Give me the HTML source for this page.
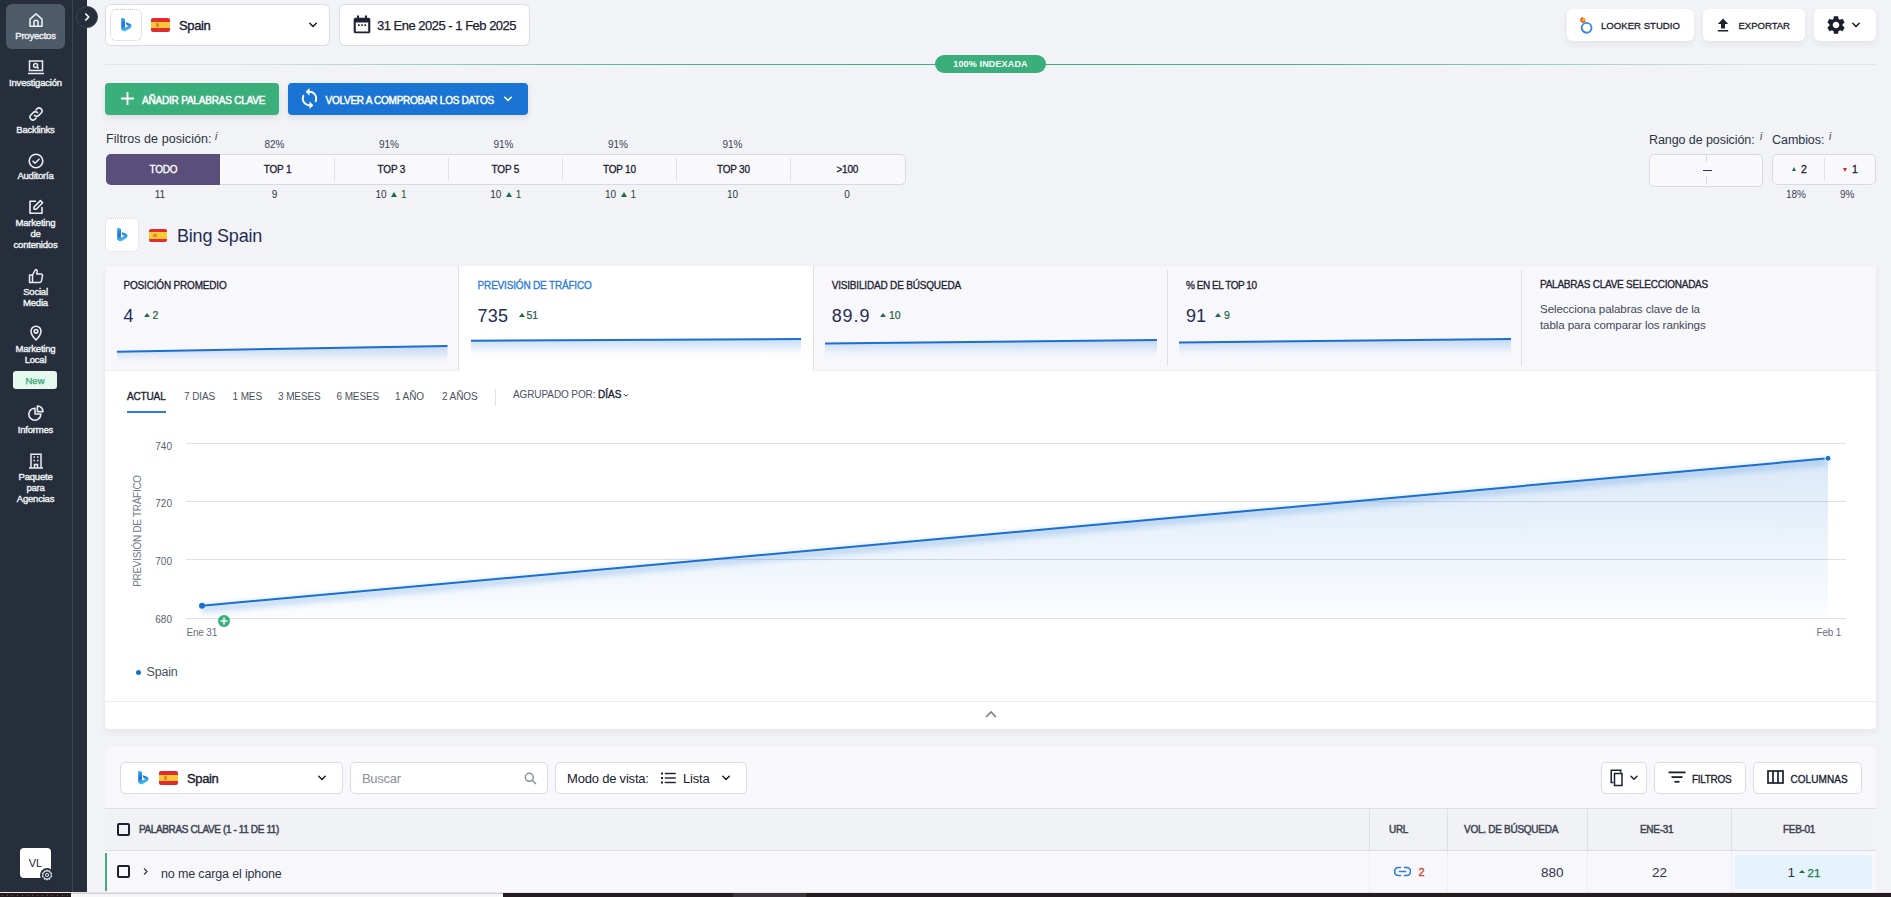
<!DOCTYPE html>
<html><head><meta charset="utf-8">
<style>
*{box-sizing:border-box;margin:0;padding:0}
html,body{width:1891px;height:897px;overflow:hidden}
body{position:relative;background:#f2f3f7;font-family:"Liberation Sans",sans-serif;color:#1e2433}
.a{position:absolute}
.nw{white-space:nowrap}
/* sidebar */
#sb{left:0;top:0;width:87px;height:893px;background:#252e3a}
#sbl{left:72px;top:0;width:1px;height:893px;background:#3c4550}
.si{position:absolute;left:0;width:71px;text-align:center;color:#eef1f5;font-size:9.5px;font-weight:400;line-height:11px;-webkit-text-stroke:.4px #eef1f5;letter-spacing:-0.2px}
.sb{font-weight:400!important;-webkit-text-stroke:.3px currentColor}
.si svg{display:block;margin:0 auto}
.box{position:absolute;background:#fff;border:1px solid #d9dbe6;border-radius:6px}
.btn{position:absolute;background:#fff;border-radius:6px;box-shadow:0 3px 6px rgba(30,40,80,.07)}
.cap{font-weight:400;font-size:10px;text-transform:uppercase;-webkit-text-stroke:.3px currentColor}
.tri{display:inline-block;width:0;height:0;border-left:3px solid transparent;border-right:3px solid transparent;border-bottom:5px solid #1c6b47}
.trd{display:inline-block;width:0;height:0;border-left:3px solid transparent;border-right:3px solid transparent;border-top:5px solid #d8262c}
.flag{position:absolute;border-radius:2px;overflow:hidden;background:linear-gradient(#e02b2f 0,#e02b2f 25%,#fcc934 25%,#fcc934 75%,#e02b2f 75%)}
.flag::after{content:"";position:absolute;left:24%;top:35%;width:18%;height:30%;background:#c0503a;opacity:.55;border-radius:1px}
</style></head><body>

<!-- SIDEBAR -->
<div id="sb" class="a"></div>
<div id="sbl" class="a"></div>
<div class="a" style="left:6px;top:4px;width:59px;height:45px;background:#4d5a68;border-radius:6px"></div>

<div class="si" style="top:12px">
<svg width="16" height="16" viewBox="0 0 16 16" fill="none" stroke="#e9edf2" stroke-width="1.6" stroke-linejoin="round"><path d="M2 7.2 8 1.8l6 5.4V14.2H2Z"/><path d="M6 14.2V10.2a2 2 0 0 1 4 0v4"/></svg>
<div style="margin-top:2px">Proyectos</div></div>

<div class="si" style="top:60px">
<svg width="18" height="15" viewBox="0 0 18 15" fill="none" stroke="#e9edf2" stroke-width="1.5"><rect x="2.5" y="1" width="13" height="9.5"/><path d="M1 13.5h16"/><circle cx="8.6" cy="5.4" r="2"/><path d="m10 7 1.6 1.6"/></svg>
<div style="margin-top:2px">Investigación</div></div>

<div class="si" style="top:106px">
<svg width="16" height="16" viewBox="0 0 16 16" fill="none" stroke="#e9edf2" stroke-width="1.6" stroke-linecap="round"><path d="M6.6 9.4a3 3 0 0 0 4.2 0l2.6-2.6a3 3 0 0 0-4.2-4.2L8 3.8"/><path d="M9.4 6.6a3 3 0 0 0-4.2 0L2.6 9.2a3 3 0 0 0 4.2 4.2L8 12.2"/></svg>
<div style="margin-top:2px">Backlinks</div></div>

<div class="si" style="top:153px">
<svg width="16" height="16" viewBox="0 0 16 16" fill="none" stroke="#e9edf2" stroke-width="1.6" stroke-linecap="round" stroke-linejoin="round"><circle cx="8" cy="8" r="6.8"/><path d="m5 8.2 2 2 4-4"/></svg>
<div style="margin-top:1px">Auditoría</div></div>

<div class="si" style="top:199px">
<svg width="16" height="16" viewBox="0 0 16 16" fill="none" stroke="#e9edf2" stroke-width="1.6" stroke-linejoin="round"><path d="M8 2.2H2v12h12V8"/><path d="M12.4 1.6 14.6 3.8 8.2 10.2H6V8Z"/></svg>
<div style="margin-top:2px">Marketing<br>de<br>contenidos</div></div>

<div class="si" style="top:268px">
<svg width="16" height="16" viewBox="0 0 16 16" fill="none" stroke="#e9edf2" stroke-width="1.5" stroke-linejoin="round"><path d="M1.5 7h3v7.5h-3z"/><path d="M4.5 7 7.5 1.5c1.5 0 2 1 1.7 2.3L8.7 6h4.3c1 0 1.7.9 1.5 1.9l-1.1 5.2c-.2.9-1 1.4-1.9 1.4H4.5"/></svg>
<div style="margin-top:2px">Social<br>Media</div></div>

<div class="si" style="top:325px">
<svg width="16" height="16" viewBox="0 0 16 16" fill="none" stroke="#e9edf2" stroke-width="1.6" stroke-linejoin="round"><path d="M8 15s5-5.2 5-8.8A5 5 0 0 0 3 6.2C3 9.8 8 15 8 15Z"/><circle cx="8" cy="6.3" r="1.8"/></svg>
<div style="margin-top:2px">Marketing<br>Local</div></div>
<div class="a" style="left:13px;top:371px;width:44px;height:18px;background:#e4f8ee;border-radius:3px;color:#2fa56f;font-size:9.5px;font-weight:400;text-align:center;line-height:19px;-webkit-text-stroke:.25px #2fa56f">New</div>

<div class="si" style="top:405px">
<svg width="16" height="16" viewBox="0 0 16 16" fill="none" stroke="#e9edf2" stroke-width="1.6" stroke-linejoin="round"><path d="M7 3.2A6 6 0 1 0 12.8 9H7Z"/><path d="M9.4 1v5.6H15A5.6 5.6 0 0 0 9.4 1Z"/></svg>
<div style="margin-top:3px">Informes</div></div>

<div class="si" style="top:453px">
<svg width="16" height="16" viewBox="0 0 16 16" fill="none" stroke="#e9edf2" stroke-width="1.5"><path d="M3 15V1.2h10V15"/><path d="M1 15h14"/><path d="M6.5 15v-3.5h3V15"/><path d="M5.5 4h1.5M9 4h1.5M5.5 7.5h1.5M9 7.5h1.5"/></svg>
<div style="margin-top:2px">Paquete<br>para<br>Agencias</div></div>

<!-- avatar -->
<div class="a" style="left:20px;top:848px;width:31px;height:30px;background:#fff;border-radius:4px;font-size:11px;color:#1d2230;text-align:center;line-height:30px">VL</div>
<div class="a" style="left:40px;top:868px;width:14px;height:14px;border-radius:50%;background:#252e3a"></div>
<svg class="a" style="left:41px;top:869px" width="12" height="12" viewBox="0 0 12 12" fill="none" stroke="#e0e4ea" stroke-width="1.1"><circle cx="6" cy="6" r="1.5"/><path d="M6 1.2 7 2.4 8.6 2 9 3.5 10.6 4.2 10 5.6 10.6 7.4 9 8.3 8.6 10 7 9.6 6 10.8 5 9.6 3.4 10 3 8.3 1.4 7.4 2 5.6 1.4 4.2 3 3.5 3.4 2 5 2.4Z"/></svg>

<!-- collapse btn -->
<div class="a" style="left:76px;top:6px;width:22px;height:22px;border-radius:50%;background:#252e3a;border:1px solid #3a4350"></div>
<svg class="a" style="left:83px;top:12px" width="9" height="10" viewBox="0 0 9 10" fill="none" stroke="#fff" stroke-width="1.7" stroke-linecap="round" stroke-linejoin="round"><path d="m2.8 2 3 3-3 3"/></svg>


<!-- TABLE -->
<div class="a" style="left:105px;top:747px;width:1771px;height:146px;background:#f8f8fc;border-radius:5px 5px 0 0"></div>
<div class="box" style="left:120px;top:762px;width:223px;height:32px;border-radius:5px"></div>
<svg class="a" style="left:137px;top:770px" width="12" height="16" viewBox="0 0 12 16"><path d="M1.2 1.2Q1.2.6 1.9.8L4.4 1.7Q5 1.9 5 2.6V10.8L8.4 8.9 6.8 8.1Q6.4 7.9 6.3 7.5L5.8 5.6Q5.7 5.1 6.2 5.3L10.4 6.9Q11.4 7.3 11.4 8.4V9.6Q11.4 10.5 10.6 11L6.2 13.8Q4.6 14.8 3 13.9L1.9 13.1Q1.2 12.6 1.2 11.8Z" fill="url(#bg1)"/></svg>
<div class="flag" style="left:159px;top:771px;width:19px;height:14px"></div>
<div class="a nw" style="left:187px;top:771px;font-size:13px;line-height:15px;font-weight:400;-webkit-text-stroke:.35px #1a2030;color:#1a2030;letter-spacing:-0.35px">Spain</div>
<svg class="a" style="left:317px;top:774px" width="10" height="8" viewBox="0 0 10 8" fill="none" stroke="#1f2430" stroke-width="1.6" stroke-linecap="round" stroke-linejoin="round"><path d="m1.8 2.3 3.2 3.2 3.2-3.2"/></svg>

<div class="box" style="left:350px;top:762px;width:198px;height:32px;border-radius:5px"></div>
<div class="a nw" style="left:362px;top:771px;font-size:13px;line-height:15px;color:#8a909c;letter-spacing:-0.3px">Buscar</div>
<svg class="a" style="left:524px;top:772px" width="13" height="13" viewBox="0 0 13 13" fill="none" stroke="#8a909c" stroke-width="1.5"><circle cx="5.3" cy="5.3" r="4"/><path d="m8.3 8.3 3.7 3.7"/></svg>

<div class="box" style="left:555px;top:762px;width:192px;height:32px;border-radius:5px"></div>
<div class="a nw" style="left:567px;top:771px;font-size:13px;line-height:15px;color:#1a2030;letter-spacing:-0.2px">Modo de vista:</div>
<svg class="a" style="left:661px;top:772px" width="15" height="12" viewBox="0 0 15 12" fill="#1a2030"><rect x="0" y="0.5" width="2" height="2"/><rect x="0" y="5" width="2" height="2"/><rect x="0" y="9.5" width="2" height="2"/><rect x="3.8" y="0.8" width="11" height="1.4"/><rect x="3.8" y="5.3" width="11" height="1.4"/><rect x="3.8" y="9.8" width="11" height="1.4"/></svg>
<div class="a nw" style="left:683px;top:771px;font-size:13px;line-height:15px;color:#1a2030;letter-spacing:-0.2px">Lista</div>
<svg class="a" style="left:721px;top:774px" width="10" height="8" viewBox="0 0 10 8" fill="none" stroke="#1f2430" stroke-width="1.6" stroke-linecap="round" stroke-linejoin="round"><path d="m1.8 2.3 3.2 3.2 3.2-3.2"/></svg>

<div class="box" style="left:1601px;top:762px;width:46px;height:32px;border-radius:5px"></div>
<svg class="a" style="left:1610px;top:769px" width="17" height="18" viewBox="0 0 17 18" fill="none" stroke="#1a2030" stroke-width="1.5"><path d="M3.5 13.5H1.2V1.2h9.5v2.3"/><rect x="4.5" y="4.5" width="7.5" height="12"/></svg>
<svg class="a" style="left:1629px;top:774px" width="10" height="8" viewBox="0 0 10 8" fill="none" stroke="#1f2430" stroke-width="1.5" stroke-linecap="round" stroke-linejoin="round"><path d="m2 2.3 3 3 3-3"/></svg>
<div class="box" style="left:1654px;top:762px;width:92px;height:32px;border-radius:5px"></div>
<svg class="a" style="left:1668px;top:771px" width="18" height="13" viewBox="0 0 18 13" fill="#1a2030"><rect x="0.5" y="0.5" width="17" height="1.8"/><rect x="3.5" y="5.2" width="11" height="1.8"/><rect x="6.5" y="9.9" width="5" height="1.8"/></svg>
<div class="a nw cap" style="left:1692px;top:773.5px;line-height:11px;color:#1a2030;letter-spacing:-0.3px">Filtros</div>
<div class="box" style="left:1753px;top:762px;width:109px;height:32px;border-radius:5px"></div>
<svg class="a" style="left:1767px;top:770px" width="17" height="14" viewBox="0 0 17 14" fill="none" stroke="#1a2030" stroke-width="1.7"><rect x="1" y="1" width="15" height="12"/><path d="M6 1v12M11 1v12"/></svg>
<div class="a nw cap" style="left:1790.5px;top:773.5px;line-height:11px;color:#1a2030;letter-spacing:0.06px">Columnas</div>

<div class="a" style="left:105px;top:808px;width:1771px;height:1px;background:#dcdfe8"></div>
<div class="a" style="left:105px;top:809px;width:1771px;height:41px;background:#f1f2f6"></div>
<div class="a" style="left:105px;top:850px;width:1771px;height:1px;background:#d9dce6"></div>
<div class="a" style="left:117px;top:823px;width:13px;height:13px;border:2px solid #1d2231;border-radius:2px"></div>
<div class="a nw cap" style="left:139px;top:824px;line-height:11px;color:#3d4452;-webkit-text-stroke:.45px #3d4452;letter-spacing:-0.38px">Palabras clave (1 - 11 de 11)</div>
<div class="a" style="left:1369px;top:809px;width:1px;height:41px;background:#dcdfe8"></div>
<div class="a" style="left:1447px;top:809px;width:1px;height:41px;background:#dcdfe8"></div>
<div class="a" style="left:1587px;top:809px;width:1px;height:41px;background:#dcdfe8"></div>
<div class="a" style="left:1731px;top:809px;width:1px;height:41px;background:#dcdfe8"></div>
<div class="a nw cap" style="left:1389px;top:824px;line-height:11px;color:#3d4452;-webkit-text-stroke:.45px #3d4452;letter-spacing:-0.3px">URL</div>
<div class="a nw cap" style="left:1464px;top:824px;line-height:11px;color:#3d4452;-webkit-text-stroke:.45px #3d4452;letter-spacing:-0.27px">Vol. de búsqueda</div>
<div class="a nw cap" style="left:1640px;top:824px;line-height:11px;color:#3d4452;-webkit-text-stroke:.45px #3d4452;letter-spacing:-0.3px">Ene-31</div>
<div class="a nw cap" style="left:1783px;top:824px;line-height:11px;color:#3d4452;-webkit-text-stroke:.45px #3d4452;letter-spacing:-0.3px">Feb-01</div>

<div class="a" style="left:105px;top:851px;width:1771px;height:42px;background:#f8f8fc"></div>
<div class="a" style="left:105px;top:853px;width:2px;height:38px;background:#3aae7b"></div>
<div class="a" style="left:1369px;top:851px;width:1px;height:42px;background:#eceef3"></div>
<div class="a" style="left:1447px;top:851px;width:1px;height:42px;background:#eceef3"></div>
<div class="a" style="left:1587px;top:851px;width:1px;height:42px;background:#eceef3"></div>
<div class="a" style="left:1731px;top:851px;width:1px;height:42px;background:#eceef3"></div>
<div class="a" style="left:117px;top:865px;width:13px;height:13px;border:2px solid #1d2231;border-radius:2px"></div>
<svg class="a" style="left:142px;top:867px" width="7" height="9" viewBox="0 0 7 9" fill="none" stroke="#3a4150" stroke-width="1.3"><path d="m2 1.5 3 3-3 3"/></svg>
<div class="a nw" style="left:161px;top:867px;font-size:12.5px;line-height:15px;color:#2d3444;letter-spacing:-0.15px">no me carga el iphone</div>
<svg class="a" style="left:1394px;top:866px" width="17" height="11" viewBox="0 0 17 11" fill="none" stroke="#2a7ad6" stroke-width="1.6" stroke-linecap="round"><path d="M6.5 1.5h-2a4 4 0 0 0 0 8h2M10.5 1.5h2a4 4 0 0 1 0 8h-2M5.5 5.5h6"/></svg>
<div class="a nw" style="left:1418.5px;top:866px;font-size:11px;line-height:13px;color:#d13a2e;-webkit-text-stroke:.3px #d13a2e">2</div>
<div class="a nw" style="left:1541px;top:865px;font-size:13.5px;line-height:15px;color:#2d3444">880</div>
<div class="a nw" style="left:1652px;top:865px;font-size:13.5px;line-height:15px;color:#2d3444">22</div>
<div class="a" style="left:1735px;top:855px;width:137px;height:34px;background:#e4f3fc;border-radius:3px"></div>
<div class="a nw" style="left:1787.5px;top:865px;font-size:13.5px;line-height:15px;color:#2d3444">1</div>
<span class="a" style="left:1799px;top:869.5px;width:0;height:0;border-left:3px solid transparent;border-right:3px solid transparent;border-bottom:3.6px solid #1c6b47"></span>
<div class="a nw" style="left:1807.5px;top:865.5px;font-size:11.5px;line-height:15px;color:#1c7a4a;-webkit-text-stroke:.25px #1c7a4a">21</div>

<!-- bottom strip -->
<div class="a" style="left:0;top:892px;width:1891px;height:1px;background:#e6e6e6"></div>
<div class="a" style="left:0;top:893px;width:1891px;height:4px;background:#231c1e"></div>
<div class="a" style="left:0;top:894px;width:70px;height:3px;background-image:radial-gradient(circle,#9a3a5a 0.7px,transparent 0.9px);background-size:5px 3px"></div>
<div class="a" style="left:71px;top:893px;width:432px;height:4px;background:#f7f7f7;border-top:1px solid #cfcfcf"></div>
<div class="a" style="left:733px;top:893px;width:73px;height:4px;background:#3b3438"></div>


<!-- TOP BAR -->
<div class="box" style="left:105px;top:4px;width:225px;height:42px"></div>
<div class="a" style="left:110px;top:9px;width:32px;height:32px;border:1px dotted #c3c7d4;border-radius:6px;background:#fff"></div>
<svg class="a" style="left:120px;top:17px" width="12" height="16" viewBox="0 0 12 16"><defs><linearGradient id="bg1" x1="0" y1="0" x2=".3" y2="1"><stop offset="0" stop-color="#35b6ee"/><stop offset=".55" stop-color="#1f6fd6"/><stop offset="1" stop-color="#45c6f2"/></linearGradient></defs><path d="M1.2 1.2Q1.2.6 1.9.8L4.4 1.7Q5 1.9 5 2.6V10.8L8.4 8.9 6.8 8.1Q6.4 7.9 6.3 7.5L5.8 5.6Q5.7 5.1 6.2 5.3L10.4 6.9Q11.4 7.3 11.4 8.4V9.6Q11.4 10.5 10.6 11L6.2 13.8Q4.6 14.8 3 13.9L1.9 13.1Q1.2 12.6 1.2 11.8Z" fill="url(#bg1)"/></svg>
<div class="flag" style="left:151px;top:18px;width:19px;height:14px"></div>
<div class="a nw" style="left:179px;top:18px;font-size:13px;line-height:16px;font-weight:400;-webkit-text-stroke:.35px #1a2030;color:#1a2030;letter-spacing:-0.35px">Spain</div>
<svg class="a" style="left:308px;top:21px" width="10" height="8" viewBox="0 0 10 8" fill="none" stroke="#1f2430" stroke-width="1.6" stroke-linecap="round" stroke-linejoin="round"><path d="m1.8 2.3 3.2 3.2 3.2-3.2"/></svg>

<div class="box" style="left:339px;top:4px;width:191px;height:42px"></div>
<svg class="a" style="left:353px;top:15px" width="18" height="19" viewBox="0 0 18 19"><path d="M4 0.5h2v2.2h6V0.5h2v2.2h1.5c1 0 1.8.8 1.8 1.8v12c0 1-.8 1.8-1.8 1.8h-13C1.5 18.3.7 17.5.7 16.5v-12c0-1 .8-1.8 1.8-1.8H4Z M2.8 7.5v9h12.4v-9Z M5 9.3h1.6v1.6H5Z M8.2 9.3h1.6v1.6H8.2Z M11.4 9.3h1.6v1.6h-1.6Z" fill="#1d2231" fill-rule="evenodd"/></svg>
<div class="a nw" style="left:377px;top:18px;font-size:13px;line-height:16px;color:#1a2030;letter-spacing:-0.5px;-webkit-text-stroke:.25px #1a2030">31 Ene 2025 - 1 Feb 2025</div>

<div class="btn" style="left:1567px;top:9px;width:127px;height:32px"></div>
<svg class="a" style="left:1579px;top:16px" width="15" height="18" viewBox="0 0 15 18"><circle cx="7.6" cy="11.8" r="4.9" fill="none" stroke="#3b86e0" stroke-width="1.9"/><circle cx="4" cy="4" r="2.5" fill="#f3b71c"/><path d="M4 1.9A2.1 2.1 0 1 0 6 4.6" fill="none" stroke="#e6322e" stroke-width="1.1"/></svg>
<div class="a nw cap" style="left:1601px;top:19.8px;font-size:9.6px;line-height:11px;color:#1d2231;letter-spacing:0px">Looker Studio</div>
<div class="btn" style="left:1703px;top:9px;width:102px;height:32px"></div>
<svg class="a" style="left:1717px;top:18px" width="12" height="14" viewBox="0 0 12 14"><path d="M6 0.5 11.2 6H8v4.4H4V6H0.8Z M0.8 12h10.4v1.6H0.8Z" fill="#1d2231"/></svg>
<div class="a nw cap" style="left:1738.5px;top:19.8px;font-size:9.6px;line-height:11px;color:#1d2231;letter-spacing:-0.05px">Exportar</div>
<div class="btn" style="left:1814px;top:9px;width:62px;height:32px"></div>
<svg class="a" style="left:1825px;top:14px" width="22" height="22" viewBox="0 0 24 24"><path fill="#1a1f2e" d="M19.14 12.94c.04-.3.06-.61.06-.94 0-.32-.02-.64-.07-.94l2.03-1.58a.49.49 0 0 0 .12-.61l-1.92-3.32a.488.488 0 0 0-.59-.22l-2.39.96c-.5-.38-1.03-.7-1.62-.94l-.36-2.54a.484.484 0 0 0-.48-.41h-3.84c-.24 0-.43.17-.47.41l-.36 2.54c-.59.24-1.13.57-1.62.94l-2.39-.96c-.22-.08-.47 0-.59.22L2.74 8.87c-.12.21-.08.47.12.61l2.03 1.58c-.05.3-.09.63-.09.94s.02.64.07.94l-2.03 1.58a.49.49 0 0 0-.12.61l1.92 3.32c.12.22.37.29.59.22l2.39-.96c.5.38 1.03.7 1.62.94l.36 2.54c.05.24.24.41.48.41h3.84c.24 0 .44-.17.47-.41l.36-2.54c.59-.24 1.13-.56 1.62-.94l2.39.96c.22.08.47 0 .59-.22l1.92-3.32c.12-.22.07-.47-.12-.61l-2.01-1.58zM12 15.6c-1.98 0-3.6-1.62-3.6-3.6s1.62-3.6 3.6-3.6 3.6 1.62 3.6 3.6-1.62 3.6-3.6 3.6z"/></svg>
<svg class="a" style="left:1851px;top:21px" width="10" height="8" viewBox="0 0 10 8" fill="none" stroke="#1f2430" stroke-width="1.6" stroke-linecap="round" stroke-linejoin="round"><path d="m1.8 2.3 3.2 3.2 3.2-3.2"/></svg>

<!-- index line -->
<div class="a" style="left:105px;top:64px;width:1771px;height:1px;background:linear-gradient(90deg,#e2e5ee 0,#dde0ea 8%,#9fd4b8 17%,#4ab386 32%,#3aae7b 50%,#4ab386 68%,#9fd4b8 83%,#dde0ea 92%,#e2e5ee 100%)"></div>
<div class="a nw" style="left:935px;top:55px;width:111px;height:18px;border-radius:9px;background:#3aae7b;color:#fff;font-size:9px;font-weight:700;text-align:center;line-height:18px;letter-spacing:0.15px">100% INDEXADA</div>

<!-- action buttons -->
<div class="a" style="left:105px;top:83px;width:174px;height:32px;background:#3aae7b;border-radius:4px;box-shadow:0 3px 6px rgba(30,40,80,.1)"></div>
<svg class="a" style="left:120px;top:91px" width="15" height="15" viewBox="0 0 15 15" stroke="#fff" stroke-width="1.8"><path d="M7.5 1v13M1 7.5h13"/></svg>
<div class="a nw cap" style="left:142px;top:94.5px;line-height:11px;color:#fff;letter-spacing:-0.2px;-webkit-text-stroke:.45px #fff">Añadir palabras clave</div>
<div class="a" style="left:288px;top:83px;width:240px;height:32px;background:#1a74d4;border-radius:4px;box-shadow:0 3px 6px rgba(30,40,80,.1)"></div>
<svg class="a" style="left:298px;top:86px" width="23" height="25" viewBox="0 0 24 24"><path fill="#fff" d="M12 4V1L8 5l4 4V6c3.31 0 6 2.69 6 6 0 1.01-.25 1.97-.7 2.8l1.46 1.46A7.93 7.93 0 0 0 20 12c0-4.42-3.58-8-8-8zm0 14c-3.31 0-6-2.69-6-6 0-1.01.25-1.97.7-2.8L5.24 7.74A7.93 7.93 0 0 0 4 12c0 4.42 3.58 8 8 8v3l4-4-4-4v3z"/></svg>
<div class="a nw cap" style="left:325.5px;top:94.5px;line-height:11px;color:#fff;letter-spacing:-0.26px;-webkit-text-stroke:.45px #fff">Volver a comprobar los datos</div>
<svg class="a" style="left:503px;top:95px" width="10" height="8" viewBox="0 0 10 8" fill="none" stroke="#fff" stroke-width="1.6" stroke-linecap="round" stroke-linejoin="round"><path d="m1.8 2.3 3.2 3.2 3.2-3.2"/></svg>


<!-- FILTERS -->
<div class="a nw" style="left:106px;top:132px;font-size:12.5px;line-height:15px;color:#2d3444;letter-spacing:0.07px">Filtros de posición:</div>
<div class="a" style="left:215px;top:131px;font-size:10px;font-style:italic;color:#2d3444">i</div>
<div class="a" style="left:106px;top:154px;width:800px;height:31px;background:#f9f9fc;border:1px solid #d7d9e4;border-radius:5px"></div>
<div class="a" style="left:106px;top:154px;width:114px;height:31px;background:#5a4f7b;border-radius:5px 0 0 5px"></div>
<div id="tabs"></div>
<div class="a nw cap" style="left:106.5px;top:164px;width:114px;text-align:center;line-height:11px;color:#fff;letter-spacing:-0.2px">TODO</div>
<div class="a nw" style="left:103.0px;top:189px;width:114px;text-align:center;font-size:10px;line-height:11px;color:#2d3444">11</div>
<div class="a nw cap" style="left:220.5px;top:164px;width:114px;text-align:center;line-height:11px;color:#1d2231;letter-spacing:-0.2px">TOP 1</div>
<div class="a nw" style="left:217.5px;top:139px;width:114px;text-align:center;font-size:10px;line-height:11px;color:#3a4150">82%</div>
<div class="a nw" style="left:217.5px;top:189px;width:114px;text-align:center;font-size:10px;line-height:11px;color:#2d3444">9</div>
<div class="a nw cap" style="left:334.4px;top:164px;width:114px;text-align:center;line-height:11px;color:#1d2231;letter-spacing:-0.2px">TOP 3</div>
<div class="a" style="left:333.9px;top:158px;width:1px;height:23px;background:#dfe1ea"></div>
<div class="a nw" style="left:332.0px;top:139px;width:114px;text-align:center;font-size:10px;line-height:11px;color:#3a4150">91%</div>
<div class="a nw" style="left:334.0px;top:189px;width:114px;text-align:center;font-size:10px;line-height:11px;color:#2d3444">10 <span class="tri" style="margin:0 1px 1px 2px"></span> <span style="color:#1f4d3a">1</span></div>
<div class="a nw cap" style="left:448.4px;top:164px;width:114px;text-align:center;line-height:11px;color:#1d2231;letter-spacing:-0.2px">TOP 5</div>
<div class="a" style="left:447.9px;top:158px;width:1px;height:23px;background:#dfe1ea"></div>
<div class="a nw" style="left:446.5px;top:139px;width:114px;text-align:center;font-size:10px;line-height:11px;color:#3a4150">91%</div>
<div class="a nw" style="left:448.8px;top:189px;width:114px;text-align:center;font-size:10px;line-height:11px;color:#2d3444">10 <span class="tri" style="margin:0 1px 1px 2px"></span> <span style="color:#1f4d3a">1</span></div>
<div class="a nw cap" style="left:562.4px;top:164px;width:114px;text-align:center;line-height:11px;color:#1d2231;letter-spacing:-0.2px">TOP 10</div>
<div class="a" style="left:561.9px;top:158px;width:1px;height:23px;background:#dfe1ea"></div>
<div class="a nw" style="left:561.0px;top:139px;width:114px;text-align:center;font-size:10px;line-height:11px;color:#3a4150">91%</div>
<div class="a nw" style="left:563.5px;top:189px;width:114px;text-align:center;font-size:10px;line-height:11px;color:#2d3444">10 <span class="tri" style="margin:0 1px 1px 2px"></span> <span style="color:#1f4d3a">1</span></div>
<div class="a nw cap" style="left:676.4px;top:164px;width:114px;text-align:center;line-height:11px;color:#1d2231;letter-spacing:-0.2px">TOP 30</div>
<div class="a" style="left:675.9px;top:158px;width:1px;height:23px;background:#dfe1ea"></div>
<div class="a nw" style="left:675.5px;top:139px;width:114px;text-align:center;font-size:10px;line-height:11px;color:#3a4150">91%</div>
<div class="a nw" style="left:675.5px;top:189px;width:114px;text-align:center;font-size:10px;line-height:11px;color:#2d3444">10</div>
<div class="a nw cap" style="left:790.3px;top:164px;width:114px;text-align:center;line-height:11px;color:#1d2231;letter-spacing:-0.2px">&gt;100</div>
<div class="a" style="left:789.8px;top:158px;width:1px;height:23px;background:#dfe1ea"></div>
<div class="a nw" style="left:790.0px;top:189px;width:114px;text-align:center;font-size:10px;line-height:11px;color:#2d3444">0</div>

<div class="a nw" style="left:1649px;top:133px;font-size:12.5px;line-height:15px;color:#2d3444;letter-spacing:-0.08px">Rango de posición:</div>
<div class="a" style="left:1760px;top:131px;font-size:10px;font-style:italic;color:#2d3444">i</div>
<div class="a nw" style="left:1772px;top:133px;font-size:12.5px;line-height:15px;color:#2d3444;letter-spacing:-0.05px">Cambios:</div>
<div class="a" style="left:1829px;top:131px;font-size:10px;font-style:italic;color:#2d3444">i</div>
<div class="a" style="left:1649px;top:154px;width:114px;height:33px;background:#f9f9fc;border:1px solid #d7d9e4;border-radius:5px"></div>
<div class="a" style="left:1706px;top:155px;width:1px;height:7px;background:#d7d9e4"></div>
<div class="a" style="left:1706px;top:177px;width:1px;height:8px;background:#d7d9e4"></div>
<div class="a" style="left:1703px;top:169.5px;width:9px;height:1.6px;background:#2a3070"></div>
<div class="a" style="left:1772px;top:154px;width:104px;height:31px;background:#f9f9fc;border:1px solid #d7d9e4;border-radius:5px"></div>
<div class="a" style="left:1824px;top:158px;width:1px;height:23px;background:#dfe1ea"></div>
<span class="a" style="left:1792px;top:167px;width:0;height:0;border-left:2.6px solid transparent;border-right:2.6px solid transparent;border-bottom:4px solid #1c6b47"></span>
<div class="a nw" style="left:1801px;top:164px;font-size:10.5px;line-height:11px;color:#1d2231;-webkit-text-stroke:.3px #1d2231">2</div>
<span class="a" style="left:1843px;top:168px;width:0;height:0;border-left:2.6px solid transparent;border-right:2.6px solid transparent;border-top:4px solid #d8262c"></span>
<div class="a nw" style="left:1852px;top:164px;font-size:10.5px;line-height:11px;color:#1d2231;-webkit-text-stroke:.3px #1d2231">1</div>
<div class="a nw" style="left:1786px;top:189px;font-size:10px;line-height:11px;color:#3a4150">18%</div>
<div class="a nw" style="left:1840px;top:189px;font-size:10px;line-height:11px;color:#3a4150">9%</div>

<!-- BING SPAIN header -->
<div class="a" style="left:105px;top:218px;width:34px;height:34px;border:1px dotted #ced1dc;border-radius:6px;background:#fff"></div>
<svg class="a" style="left:116px;top:227px" width="12" height="16" viewBox="0 0 12 16"><path d="M1.2 1.2Q1.2.6 1.9.8L4.4 1.7Q5 1.9 5 2.6V10.8L8.4 8.9 6.8 8.1Q6.4 7.9 6.3 7.5L5.8 5.6Q5.7 5.1 6.2 5.3L10.4 6.9Q11.4 7.3 11.4 8.4V9.6Q11.4 10.5 10.6 11L6.2 13.8Q4.6 14.8 3 13.9L1.9 13.1Q1.2 12.6 1.2 11.8Z" fill="url(#bg1)"/></svg>
<div class="flag" style="left:149px;top:229px;width:18px;height:13px"></div>
<div class="a nw" style="left:177px;top:226px;font-size:18px;line-height:21px;color:#262d52;letter-spacing:-0.2px">Bing Spain</div>


<!-- METRIC CARDS -->
<div class="a" style="left:105px;top:266px;width:1771px;height:463px;background:#fff;border-radius:4px;box-shadow:0 3px 7px rgba(40,50,90,.07)"></div>
<div class="a" style="left:105px;top:266px;width:353px;height:105px;background:#f8f8fc;border-bottom:1px solid #eceef4"></div>
<div class="a" style="left:814px;top:266px;width:1062px;height:105px;background:#f8f8fc;border-bottom:1px solid #eceef4"></div>
<div class="a" style="left:458px;top:266px;width:1px;height:104px;background:#dfe1ea"></div>
<div class="a" style="left:813px;top:266px;width:1px;height:104px;background:#dfe1ea"></div>
<div class="a" style="left:1167px;top:270px;width:1px;height:96px;background:#dfe1ea"></div>
<div class="a" style="left:1521px;top:270px;width:1px;height:96px;background:#dfe1ea"></div>
<div class="a nw cap" style="left:123.5px;top:280px;line-height:11px;color:#1d2231;letter-spacing:-0.18px">Posición promedio</div>
<div class="a nw" style="left:123.5px;top:305.5px;font-size:18px;line-height:21px;color:#262d52;letter-spacing:0px">4</div>
<span class="a" style="left:144px;top:313px;width:0;height:0;border-left:3.2px solid transparent;border-right:3.2px solid transparent;border-bottom:4.6px solid #1c6b47"></span>
<div class="a nw" style="left:152.5px;top:308.5px;font-size:10.5px;line-height:12px;color:#1c5e42;-webkit-text-stroke:.2px #1c5e42">2</div>
<svg class="a" style="left:117px;top:342.5px" width="330.5" height="22" viewBox="0 0 330.5 22"><defs><linearGradient id="sg0" x1="0" y1="0" x2="0" y2="1"><stop offset="0" stop-color="#2a7ad6" stop-opacity=".26"/><stop offset=".75" stop-color="#2a7ad6" stop-opacity=".03"/><stop offset="1" stop-color="#2a7ad6" stop-opacity="0"/></linearGradient></defs><path d="M0 8.699999999999989 L330.5 3.0 V22 H0Z" fill="url(#sg0)"/><path d="M0 8.699999999999989 L330.5 3.0" stroke="#1b6fd0" stroke-width="2" fill="none"/></svg>
<div class="a nw cap" style="left:477.6px;top:280px;line-height:11px;color:#2a7ad6;letter-spacing:-0.18px">Previsión de tráfico</div>
<div class="a nw" style="left:477.6px;top:305.5px;font-size:18px;line-height:21px;color:#262d52;letter-spacing:0.2px">735</div>
<span class="a" style="left:518.7px;top:313px;width:0;height:0;border-left:3.2px solid transparent;border-right:3.2px solid transparent;border-bottom:4.6px solid #1c6b47"></span>
<div class="a nw" style="left:526.5px;top:308.5px;font-size:10.5px;line-height:12px;color:#1c5e42;-webkit-text-stroke:.2px #1c5e42">51</div>
<svg class="a" style="left:470.7px;top:335.5px" width="330.8" height="22" viewBox="0 0 330.8 22"><defs><linearGradient id="sg1" x1="0" y1="0" x2="0" y2="1"><stop offset="0" stop-color="#2a7ad6" stop-opacity=".26"/><stop offset=".75" stop-color="#2a7ad6" stop-opacity=".03"/><stop offset="1" stop-color="#2a7ad6" stop-opacity="0"/></linearGradient></defs><path d="M0 4.699999999999989 L330.8 3.0 V22 H0Z" fill="url(#sg1)"/><path d="M0 4.699999999999989 L330.8 3.0" stroke="#1b6fd0" stroke-width="2" fill="none"/></svg>
<div class="a nw cap" style="left:831.7px;top:280px;line-height:11px;color:#1d2231;letter-spacing:-0.18px">Visibilidad de búsqueda</div>
<div class="a nw" style="left:831.7px;top:305.5px;font-size:18px;line-height:21px;color:#262d52;letter-spacing:0.9px">89.9</div>
<span class="a" style="left:879.6px;top:313px;width:0;height:0;border-left:3.2px solid transparent;border-right:3.2px solid transparent;border-bottom:4.6px solid #1c6b47"></span>
<div class="a nw" style="left:889px;top:308.5px;font-size:10.5px;line-height:12px;color:#1c5e42;-webkit-text-stroke:.2px #1c5e42">10</div>
<svg class="a" style="left:825px;top:336.5px" width="332" height="22" viewBox="0 0 332 22"><defs><linearGradient id="sg2" x1="0" y1="0" x2="0" y2="1"><stop offset="0" stop-color="#2a7ad6" stop-opacity=".26"/><stop offset=".75" stop-color="#2a7ad6" stop-opacity=".03"/><stop offset="1" stop-color="#2a7ad6" stop-opacity="0"/></linearGradient></defs><path d="M0 6.5 L332 3.0 V22 H0Z" fill="url(#sg2)"/><path d="M0 6.5 L332 3.0" stroke="#1b6fd0" stroke-width="2" fill="none"/></svg>
<div class="a nw cap" style="left:1186px;top:280px;line-height:11px;color:#1d2231;letter-spacing:-0.45px">% en el top 10</div>
<div class="a nw" style="left:1186px;top:305.5px;font-size:18px;line-height:21px;color:#262d52;letter-spacing:0px">91</div>
<span class="a" style="left:1214.5px;top:313px;width:0;height:0;border-left:3.2px solid transparent;border-right:3.2px solid transparent;border-bottom:4.6px solid #1c6b47"></span>
<div class="a nw" style="left:1224px;top:308.5px;font-size:10.5px;line-height:12px;color:#1c5e42;-webkit-text-stroke:.2px #1c5e42">9</div>
<svg class="a" style="left:1179px;top:336.3px" width="332" height="22" viewBox="0 0 332 22"><defs><linearGradient id="sg3" x1="0" y1="0" x2="0" y2="1"><stop offset="0" stop-color="#2a7ad6" stop-opacity=".26"/><stop offset=".75" stop-color="#2a7ad6" stop-opacity=".03"/><stop offset="1" stop-color="#2a7ad6" stop-opacity="0"/></linearGradient></defs><path d="M0 6.5 L332 3.0 V22 H0Z" fill="url(#sg3)"/><path d="M0 6.5 L332 3.0" stroke="#1b6fd0" stroke-width="2" fill="none"/></svg>

<div class="a nw cap" style="left:1540px;top:279px;line-height:11px;color:#1d2231;letter-spacing:-0.24px">Palabras clave seleccionadas</div>
<div class="a nw" style="left:1540px;top:300.5px;font-size:11.6px;line-height:16px;color:#3f4757;letter-spacing:-0.1px">Selecciona palabras clave de la<br>tabla para comparar los rankings</div>


<!-- CHART -->
<div class="a nw" style="left:127px;top:391px;font-size:10px;line-height:11px;color:#1d2231;-webkit-text-stroke:.35px #1d2231;letter-spacing:-0.15px">ACTUAL</div>
<div class="a" style="left:127px;top:411px;width:39px;height:2px;background:#2a7ad6"></div>
<div class="a nw" style="left:184px;top:391px;font-size:10px;line-height:11px;color:#4a5060;letter-spacing:-0.1px">7 DIAS</div>
<div class="a nw" style="left:232.5px;top:391px;font-size:10px;line-height:11px;color:#4a5060;letter-spacing:-0.1px">1 MES</div>
<div class="a nw" style="left:278px;top:391px;font-size:10px;line-height:11px;color:#4a5060;letter-spacing:-0.1px">3 MESES</div>
<div class="a nw" style="left:336.5px;top:391px;font-size:10px;line-height:11px;color:#4a5060;letter-spacing:-0.1px">6 MESES</div>
<div class="a nw" style="left:395px;top:391px;font-size:10px;line-height:11px;color:#4a5060;letter-spacing:-0.1px">1 AÑO</div>
<div class="a nw" style="left:442px;top:391px;font-size:10px;line-height:11px;color:#4a5060;letter-spacing:-0.1px">2 AÑOS</div>

<div class="a" style="left:495px;top:389px;width:1px;height:17px;background:#dfe1ea"></div>
<div class="a nw" style="left:513px;top:389px;font-size:10px;line-height:11px;color:#4a5060;letter-spacing:-0.1px">AGRUPADO POR: <span style="color:#1d2231;-webkit-text-stroke:.35px #1d2231;letter-spacing:0px">DÍAS</span></div>
<svg class="a" style="left:622.5px;top:392.5px" width="6" height="5" viewBox="0 0 6 5" fill="none" stroke="#1d2231" stroke-width="1"><path d="m1 1.2 2 2 2-2"/></svg>
<div class="a nw" style="left:150px;top:440.7px;width:22px;text-align:right;font-size:10px;line-height:12px;color:#5b6272">740</div>
<div class="a" style="left:186px;top:442.7px;width:1660px;height:1px;background:#dcdfe8"></div>
<div class="a nw" style="left:150px;top:498.0px;width:22px;text-align:right;font-size:10px;line-height:12px;color:#5b6272">720</div>
<div class="a" style="left:186px;top:501.0px;width:1660px;height:1px;background:#dcdfe8"></div>
<div class="a nw" style="left:150px;top:556.3px;width:22px;text-align:right;font-size:10px;line-height:12px;color:#5b6272">700</div>
<div class="a" style="left:186px;top:559.3px;width:1660px;height:1px;background:#dcdfe8"></div>
<div class="a nw" style="left:150px;top:613.5px;width:22px;text-align:right;font-size:10px;line-height:12px;color:#5b6272">680</div>
<div class="a" style="left:186px;top:617.5px;width:1660px;height:1px;background:#dcdfe8"></div>

<div class="a nw" style="left:138px;top:531px;width:0;height:0"><div class="nw" style="position:absolute;left:0;top:0;transform:translate(-50%,-50%) rotate(-90deg);font-size:10px;line-height:12px;color:#737989;letter-spacing:-0.3px">PREVISIÓN DE TRÁFICO</div></div>
<svg class="a" style="left:0;top:0" width="1891" height="897" viewBox="0 0 1891 897">
<defs>
<linearGradient id="cf" x1="0" y1="458" x2="0" y2="618" gradientUnits="userSpaceOnUse"><stop offset="0" stop-color="#2a7ad6" stop-opacity=".17"/><stop offset="1" stop-color="#2a7ad6" stop-opacity=".02"/></linearGradient>
<filter id="blr" x="-5%" y="-50%" width="110%" height="200%"><feGaussianBlur stdDeviation="3"/></filter>
</defs>
<path d="M202 605.7 L1828 458.3 V618 H202Z" fill="url(#cf)"/>
<path d="M202 609 L1828 461.5" stroke="#2a7ad6" stroke-opacity=".35" stroke-width="5" filter="url(#blr)" fill="none"/>
<path d="M202 605.7 L1828 458.3" stroke="#1b6fd0" stroke-width="2" fill="none"/>
<circle cx="202" cy="605.7" r="3" fill="#1b6fd0"/>
<circle cx="1828" cy="458.3" r="3" fill="#1b6fd0" stroke="#fff" stroke-width="1"/>
<circle cx="224" cy="621" r="6" fill="#3aae7b"/>
<path d="M224 617.6v6.8M220.6 621h6.8" stroke="#fff" stroke-width="1.5"/>
</svg>
<div class="a nw" style="left:186.5px;top:627px;font-size:10px;line-height:12px;color:#6a7080;letter-spacing:-0.2px">Ene 31</div>
<div class="a nw" style="left:1816.5px;top:627px;font-size:10px;line-height:12px;color:#6a7080;letter-spacing:-0.2px">Feb 1</div>
<div class="a" style="left:136px;top:670px;width:5px;height:5px;border-radius:50%;background:#1b6fd0"></div>
<div class="a nw" style="left:146.5px;top:665px;font-size:12.5px;line-height:14px;color:#4a5160;letter-spacing:-0.2px">Spain</div>
<div class="a" style="left:105px;top:701px;width:1771px;height:1px;background:#eceef4"></div>
<svg class="a" style="left:984px;top:709px" width="14" height="10" viewBox="0 0 14 10" fill="none" stroke="#7a8090" stroke-width="1.6"><path d="m2 8 5-5 5 5"/></svg>

</body></html>
